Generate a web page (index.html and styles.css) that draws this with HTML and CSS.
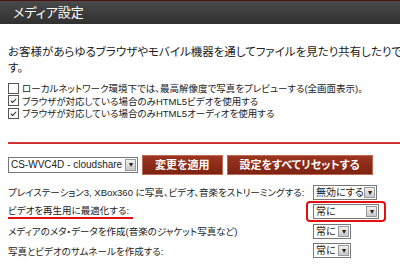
FILE: index.html
```html
<!DOCTYPE html>
<html lang="ja">
<head>
    <meta charset="UTF-8">
    <title>メディア設定</title>
    <link rel="stylesheet" href="styles.css">
</head>
<body>
    <div class="header">メディア設定</div>
    <div class="page">
        <p class="intro">お客様があらゆるブラウザやモバイル機器を通してファイルを見たり共有したりできるようにしま<br>す。</p>
        <div class="checks">
            <div class="check"><span class="box"></span>ローカルネットワーク環境下では、最高解像度で写真をプレビューする(全画面表示)。</div>
            <div class="check"><span class="box on"><svg viewBox="0 0 10 10"><path d="M2 4.5 L4 6.5 L8 2.5 L8 4 L4 8 L2 6 Z" fill="#222"/></svg></span>ブラウザが対応している場合のみHTML5ビデオを使用する</div>
            <div class="check"><span class="box on"><svg viewBox="0 0 10 10"><path d="M2 4.5 L4 6.5 L8 2.5 L8 4 L4 8 L2 6 Z" fill="#222"/></svg></span>ブラウザが対応している場合のみHTML5オーディオを使用する</div>
        </div>
        <div class="rule"></div>
        <div class="toolbar">
            <div class="select server"><span class="val">CS-WVC4D - cloudshare</span><span class="arrow">▾</span></div>
            <div class="btn">変更を適用</div>
            <div class="btn">設定をすべてリセットする</div>
        </div>
        <div class="rows">
            <div class="row">
                <div class="label">プレイステーション3, XBox360 に写真、ビデオ、音楽をストリーミングする:</div>
                <div class="select w62"><span class="val">無効にする</span><span class="arrow">▾</span></div>
            </div>
            <div class="row">
                <div class="label"><span class="mark">ビデオを再生用に最適化する:</span></div>
                <div class="hl"><div class="select w64"><span class="val">常に</span><span class="arrow">▾</span></div></div>
            </div>
            <div class="row">
                <div class="label">メディアのメタ・データを作成(音楽のジャケット写真など)</div>
                <div class="select w36"><span class="val">常に</span><span class="arrow">▾</span></div>
            </div>
            <div class="row">
                <div class="label">写真とビデオのサムネールを作成する:</div>
                <div class="select w36"><span class="val">常に</span><span class="arrow">▾</span></div>
            </div>
        </div>
    </div>
</body>
</html>
```

FILE: styles.css
```css
body {
    margin: 0;
    overflow: hidden;
    background: #fff;
    color: #222;
    font-family: "Liberation Sans", "Noto Sans CJK JP", sans-serif;
    font-feature-settings: "palt";
}
.header {
    height: 23px;
    border-top: 1px solid #4a1414;
    background: linear-gradient(#4a4a4a, #303030);
    color: #fff;
    font-size: 13px;
    line-height: 23px;
    padding-left: 13px;
}
.page {
    width: 440px;
    padding: 0 8px;
}
.intro {
    margin: 20px 0 0;
    font-size: 11.5px;
    line-height: 16px;
    white-space: nowrap;
}
.checks {
    margin-top: 6px;
    font-size: 9.5px;
}
.check {
    display: flex;
    align-items: center;
    height: 12.5px;
}
.box {
    width: 9px;
    height: 9px;
    border: 1px solid #555;
    margin-right: 3px;
    background: #fff;
    display: flex;
}
.box svg {
    width: 9px;
    height: 9px;
}
.rule {
    height: 2px;
    margin-top: 22px;
    background: linear-gradient(#d44, #c22);
}
.toolbar {
    display: flex;
    align-items: center;
    gap: 4px;
    margin-top: 11px;
    height: 20px;
}
.select {
    display: flex;
    align-items: stretch;
    height: 13px;
    border: 1px solid #777;
    background: #fff;
    font-size: 10px;
    line-height: 13px;
}
.select .val {
    flex: 1;
    padding-left: 2px;
    white-space: nowrap;
    overflow: hidden;
}
.select .arrow {
    width: 11px;
    margin: 1px;
    background: linear-gradient(#f0f0f0, #c8c8c8);
    border: 1px solid #999;
    box-sizing: border-box;
    font-size: 8px;
    line-height: 10px;
    text-align: center;
    color: #222;
}
.server {
    width: 128px;
    height: 14px;
    font-size: 10px;
    line-height: 14px;
}
.btn {
    height: 18px;
    padding: 0 12px;
    border: 1px solid #c06a55;
    background: linear-gradient(#9a3520, #7d2412);
    color: #fff;
    font-size: 11px;
    font-weight: bold;
    line-height: 18px;
    white-space: nowrap;
}
.rows {
    margin-top: 8px;
    font-size: 9.5px;
}
.row {
    display: flex;
    align-items: center;
    height: 19.5px;
}
.label {
    width: 305px;
    white-space: nowrap;
}
.mark {
    display: inline-block;
    border-bottom: 2px solid #e01010;
    line-height: 13px;
    padding-right: 4px;
}
.hl {
    margin-left: -7px;
    padding: 1px 5px;
    border: 2px solid #e41010;
    border-radius: 4px;
}
.w62 { width: 62px; }
.w64 { width: 64px; }
.w36 { width: 36px; }
```
